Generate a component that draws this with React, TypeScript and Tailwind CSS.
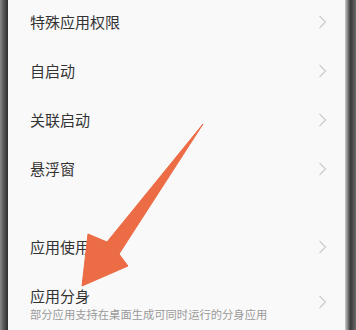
import React from "react";

const Chevron = () => (
  <svg width="9" height="14" viewBox="0 0 9 14" className="shrink-0">
    <path d="M1.5 1 L7.5 7 L1.5 13" fill="none" stroke="#c9c9c9" strokeWidth="1.1" />
  </svg>
);

const Row = ({ title }: { title: string }) => (
  <div className="flex h-[49px] items-center justify-between">
    <span className="text-[15px] leading-[20px] text-[#333333]">{title}</span>
    <Chevron />
  </div>
);

export default function App() {
  return (
    <div
      className="relative flex h-[330px] w-[356px] overflow-hidden"
      style={{ fontFamily: '"Noto Sans CJK SC", "Noto Sans", sans-serif' }}
    >
      <div className="w-[8px] shrink-0 bg-gradient-to-r from-[#8a8a8a] via-[#555555] to-[#2e2e2e]" />
      <div className="flex-1 bg-[#f9f9f9] pl-[22px] pr-[18px]">
        <div className="-mt-[3px]">
          <Row title="特殊应用权限" />
          <Row title="自启动" />
          <Row title="关联启动" />
          <Row title="悬浮窗" />
          <div className="h-[29px]" />
          <Row title="应用使用时长" />
          <div className="flex h-[60px] items-start justify-between">
            <div className="flex flex-col pt-[15px]">
              <span className="text-[15px] leading-[20px] text-[#333333]">应用分身</span>
              <span className="text-[11.3px] leading-[16px] text-[#9a9a9a]">
                部分应用支持在桌面生成可同时运行的分身应用
              </span>
            </div>
            <div className="mt-[24px]">
              <Chevron />
            </div>
          </div>
        </div>
      </div>
      <div className="w-[11px] shrink-0 bg-gradient-to-r from-[#cfcfcf] via-[#3a3a3a] to-[#6a6a6a]" />
      <svg
        className="pointer-events-none absolute left-0 top-0"
        width="356"
        height="330"
        viewBox="0 0 356 330"
      >
        <polygon
          points="203,124 119,254 128,266 82,286 88,234 107,242"
          fill="#ec6c45"
          stroke="#ec6c45"
          strokeWidth="1"
          strokeLinejoin="round"
        />
      </svg>
    </div>
  );
}
